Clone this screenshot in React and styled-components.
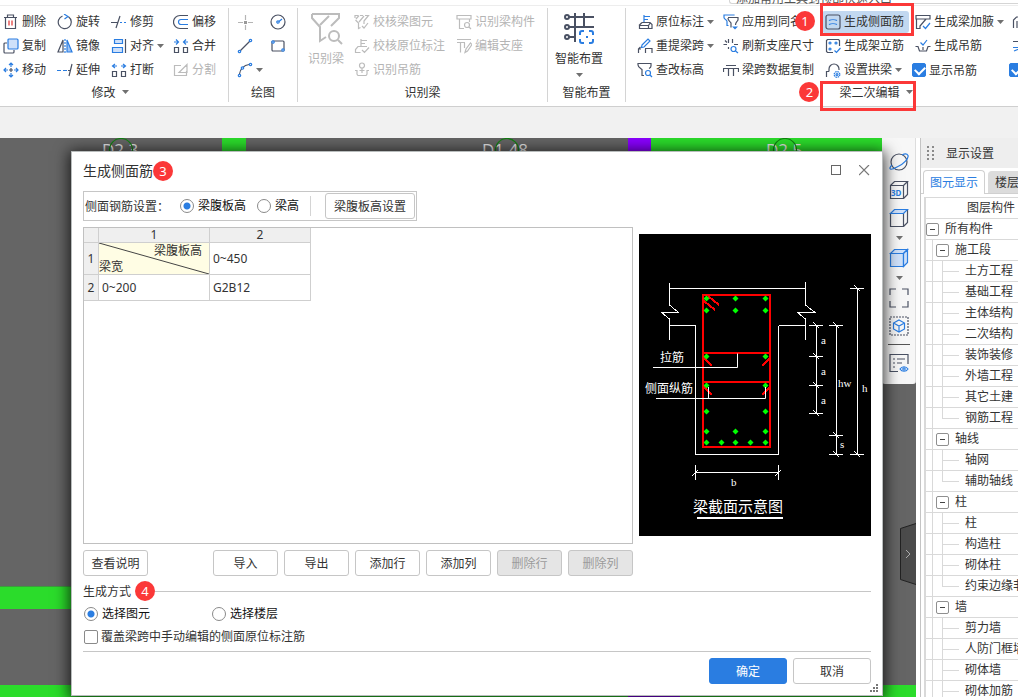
/* eslint-disable react/prop-types */

import { useState } from "react";
import styled, { createGlobalStyle, css } from "styled-components";

const GlobalStyle = createGlobalStyle`
  * {
    box-sizing: border-box;
  }
  body {
    margin: 0;
    overflow: hidden;
    font-family: "Noto Sans", "Noto Sans CJK SC", sans-serif;
    font-size: 12px;
    color: #333;
  }
  button, input {
    margin: 0;
    font-family: inherit;
    font-size: inherit;
    color: inherit;
  }
`;

const DARK = "#4a5163";
const BLUE = "#2a7de1";
const MUTED = "#bcbcbc";

const Page = styled.div`
  display: flex;
  flex-direction: column;
  height: 100vh;
  overflow: hidden;
  background-color: #f1f1f1;
`;

/* ---------- ribbon ---------- */

const TopStrip = styled.div`
  display: flex;
  flex: none;
  justify-content: flex-end;
  height: 6px;
  overflow: hidden;
  background-color: #fff;
  border-bottom: 1px solid #ededed;
`;
const HintBox = styled.div`
  display: flex;
  align-items: flex-end;
  width: 289px;
  height: 4px;
  padding-left: 6px;
  line-height: 8px;
  color: #555;
  border: 1px solid #d5d5d5;
  border-top: none;
  border-right: none;
  border-radius: 0 0 0 3px;
`;
const RibbonBar = styled.header`
  position: relative;
  z-index: 2;
  display: flex;
  flex: none;
  height: 101px;
  background-color: #fff;
  border-bottom: 1px solid #cfcfcf;
`;
const Group = styled.section`
  display: flex;
  flex: none;
  flex-direction: column;
  width: ${(p) => p.$width}px;
  margin: 2px 0 4px;
  padding-top: 2px;
  border-right: 1px solid #d4d4d4;
`;
const GroupBody = styled.div`
  display: flex;
  height: 72px;
  padding-left: ${(p) => p.$indent || 0}px;
`;
const GroupLabel = styled.div`
  display: flex;
  align-items: center;
  justify-content: center;
  height: 24px;
  padding-right: ${(p) => p.$end || 0}px;
`;
const LabelButton = styled.button`
  position: relative;
  display: flex;
  align-items: center;
  gap: 6px;
  height: 20px;
  padding: 0;
  background: none;
  border: none;
`;
const ToolGrid = styled.div`
  display: grid;
  grid-template-columns: ${(p) => p.$columns};
  grid-template-rows: repeat(3, 24px);
  grid-auto-flow: column;
  align-items: center;
  justify-items: start;
`;
const ToolButton = styled.button`
  position: relative;
  display: flex;
  align-items: center;
  gap: 3px;
  height: 22px;
  padding: 0 3px;
  line-height: 20px;
  white-space: nowrap;
  background-color: ${(p) => (p.$active ? "#c2d8f0" : "transparent")};
  border: none;
  border-radius: 3px;
  &:disabled {
    color: #b4b4b4;
  }
  &:hover:enabled {
    background-color: #d6e5f6;
  }
  ${(p) =>
    p.$active &&
    css`
      padding: 0 5px 0 3px;
    `}
`;
const BigButton = styled.button`
  display: flex;
  flex-direction: column;
  align-items: center;
  width: 52px;
  height: 72px;
  padding: 1px 0 0;
  line-height: 16px;
  white-space: nowrap;
  background: none;
  border: none;
  gap: 6px;
  &:disabled {
    width: 42px;
    margin-right: 4px;
    color: #b4b4b4;
  }
`;
const ToolCheck = styled.label`
  display: flex;
  align-items: center;
  gap: 3px;
  white-space: nowrap;
`;
const Frame = styled.span`
  position: absolute;
  inset: ${(p) => p.$inset};
  border: 3px solid #fb3838;
  pointer-events: none;
`;
const Badge = styled.span`
  display: flex;
  flex: none;
  align-items: center;
  justify-content: center;
  width: 20px;
  height: 20px;
  font-size: 13px;
  line-height: 20px;
  color: #fff;
  background-color: #fb3838;
  border-radius: 50%;
`;
const FloatingBadge = styled(Badge)`
  position: absolute;
  top: 0;
  left: ${(p) => p.$left}px;
`;

/* ---------- form controls ---------- */

const Radio = styled.input.attrs({ type: "radio" })`
  flex: none;
  width: 14px;
  height: 14px;
  appearance: none;
  background-color: #fff;
  border: 1px solid #8a8a8a;
  border-radius: 50%;
  &:checked {
    background-image: radial-gradient(circle, ${BLUE} 3px, transparent 4px);
  }
`;
const Checkbox = styled.input.attrs({ type: "checkbox" })`
  position: relative;
  flex: none;
  width: 14px;
  height: 14px;
  appearance: none;
  background-color: #fff;
  border: 1px solid #8a8a8a;
  border-radius: 2px;
  &:checked {
    background-color: ${BLUE};
    border-color: ${BLUE};
  }
  &:checked::after {
    content: "";
    position: absolute;
    top: 2px;
    left: 2px;
    width: 8px;
    height: 5px;
    border: solid #fff;
    border-width: 0 0 2px 2px;
    transform: rotate(-45deg);
  }
`;
const Choice = styled.label`
  display: flex;
  align-items: center;
  gap: 4px;
  min-width: ${(p) => p.$width || 0}px;
  line-height: 18px;
  color: #111;
`;
const Button = styled.button`
  width: ${(p) => p.$width || 65}px;
  height: 26px;
  padding: 2px 0 0;
  line-height: 20px;
  white-space: nowrap;
  color: ${(p) => (p.$primary ? "#fff" : "#333")};
  background-color: ${(p) => (p.$primary ? BLUE : "#fff")};
  border: 1px solid ${(p) => (p.$primary ? BLUE : "#c6c6c6")};
  border-radius: 3px;
  &:disabled {
    color: #9b9b9b;
    background-color: #e5e5e5;
  }
`;

/* ---------- workspace ---------- */

const Workspace = styled.main`
  display: flex;
  flex: 1;
  min-height: 0;
  margin-top: 31px;
  background-color: #fff;
`;
const Canvas = styled.div`
  position: relative;
  flex: 1;
  min-width: 0;
  overflow: hidden;
  background-color: #656565;
`;
const Drawing = styled.svg`
  display: block;
  width: 100%;
  height: 100%;
`;
const ViewBar = styled.nav`
  position: absolute;
  top: 0;
  right: 0;
  display: flex;
  flex-direction: column;
  align-items: center;
  gap: 8px;
  width: 34px;
  padding: 14px 0 11px 1px;
  background-color: #f7f7f7;
  border: solid #ddd;
  border-width: 0 1px 0 0;
  border-radius: 0 0 3px 3px;
`;
const ViewButton = styled.button`
  display: flex;
  padding: 0;
  background: none;
  border: none;
`;
const ViewRule = styled.span`
  width: 22px;
  height: 1px;
  background-color: #555;
`;
const CollapseTab = styled.button`
  position: absolute;
  top: 385px;
  right: 0;
  display: flex;
  padding: 0;
  background: none;
  border: none;
`;

/* ---------- dialog ---------- */

const Dialog = styled.section`
  position: absolute;
  top: 13px;
  right: 33px;
  left: 71px;
  display: flex;
  flex-direction: column;
  padding: 0 11px 11px;
  background-color: #fff;
  border: 1px solid #b9bdbd;
  box-shadow: 0 2px 14px 2px rgba(0, 0, 0, 0.75);
`;
const TitleBar = styled.div`
  display: flex;
  align-items: center;
  height: 38px;
`;
const Title = styled.h1`
  margin: 0;
  font-size: 14px;
  font-weight: 400;
  line-height: 20px;
`;
const WindowButtons = styled.div`
  display: flex;
  gap: 16px;
  margin-left: auto;
`;
const IconButton = styled.button`
  display: flex;
  padding: 0;
  background: none;
  border: none;
`;
const Settings = styled.div`
  display: flex;
  align-items: center;
  align-self: flex-start;
  height: 30px;
  margin-top: 1px;
  padding: 0 1px;
  border: 1px solid #c6c6c6;
`;
const SettingsLabel = styled.span`
  width: 95px;
`;
const SettingsChoice = styled(Choice)`
  margin-right: 11px;
`;
const Divider = styled.span`
  width: 1px;
  height: 20px;
  margin-right: 14px;
  background-color: #d4d4d4;
`;
const Content = styled.div`
  display: flex;
  align-items: center;
  gap: 6px;
  margin-top: 6px;
`;
const TableArea = styled.div`
  flex: 1;
  align-self: stretch;
  min-height: 317px;
  border: 1px solid #c0c0c0;
`;
const Table = styled.table`
  width: 227px;
  table-layout: fixed;
  border-spacing: 0;
  td,
  th {
    padding: 0;
    font-weight: 400;
    line-height: 14px;
    border: solid #cfcfcf;
    border-width: 0 1px 1px 0;
  }
`;
const HeadCell = styled.th`
  color: #333;
  background-color: #efefef;
`;
const Col = styled.col`
  width: ${(p) => p.$width}px;
`;
const Row = styled.tr`
  height: ${(p) => p.$height}px;
`;
const Value = styled.span`
  padding-left: 3px;
`;
const SplitCell = styled.div`
  position: relative;
  display: flex;
  flex-direction: column;
  justify-content: space-between;
  height: 31px;
  line-height: 16px;
  background-color: #fffde4;
`;
const SplitTop = styled.span`
  padding-right: 7px;
  text-align: right;
`;
const SplitLine = styled.svg`
  position: absolute;
  inset: 0;
  width: 100%;
  height: 100%;
`;
const Diagram = styled.svg`
  flex: none;
  width: 232px;
  height: 302px;
  margin-bottom: 1px;
  background-color: #000;
`;
const Actions = styled.div`
  display: flex;
  gap: 6px;
  margin-top: 6px;
`;
const ActionsGap = styled.span`
  width: 53px;
`;
const Fieldset = styled.fieldset`
  min-width: 0;
  margin: 6px 0 0;
  padding: 0 0 5px;
  border: none;
  border-bottom: 1px solid #c6c6c6;
`;
const SectionHead = styled.div`
  display: flex;
  align-items: center;
  gap: 4px;
  height: 18px;
`;
const SectionLine = styled.span`
  flex: 1;
  height: 1px;
  margin-left: -4px;
  background-color: #c6c6c6;
`;
const Choices = styled.div`
  display: flex;
  margin: 5px 0;
  padding-left: 1px;
`;
const WideChoice = styled(Choice)`
  gap: 3px;
  padding-left: 1px;
  color: #333;
`;
const Footer = styled.div`
  display: flex;
  justify-content: flex-end;
  gap: 6px;
  padding-top: 6px;
`;
const ResizeGrip = styled.svg`
  position: absolute;
  right: 3px;
  bottom: 2px;
`;

/* ---------- side panel ---------- */

const Panel = styled.aside`
  display: flex;
  flex: none;
  flex-direction: column;
  width: 98px;
  margin-left: 4px;
  overflow: hidden;
  white-space: nowrap;
  background-color: #fff;
  border-left: 1px solid #c4c4c4;
`;
const PanelHead = styled.div`
  display: flex;
  flex: none;
  align-items: center;
  gap: 12px;
  height: 30px;
  padding-left: 6px;
  background-color: #eee;
`;
const PanelTitle = styled.h2`
  margin: 0;
  font-size: 12px;
  font-weight: 400;
`;
const Tabs = styled.div`
  display: flex;
  flex: none;
  align-items: flex-end;
  gap: 3px;
  height: 26px;
  padding-left: 2px;
  border-bottom: 1px solid #d0d0d0;
`;
const Tab = styled.button`
  flex: none;
  height: ${(p) => (p.$active ? 24 : 22)}px;
  margin-bottom: ${(p) => (p.$active ? -1 : 0)}px;
  padding: 0 6px;
  line-height: 20px;
  color: ${(p) => (p.$active ? BLUE : "#333")};
  background-color: ${(p) => (p.$active ? "#fff" : "#dcdcdc")};
  border: 1px solid ${(p) => (p.$active ? "#d0d0d0" : "#dcdcdc")};
  border-bottom: none;
  border-radius: 4px 4px 0 0;
`;
const Tree = styled.ul`
  margin: 3px 0 0 3px;
  padding: 0;
  list-style: none;
  border-top: 1px solid #d9d9d9;
  border-left: 2px solid #d9d9d9;
`;
const TreeRow = styled.li`
  display: flex;
  align-items: center;
  height: 21px;
  line-height: 20px;
  border-bottom: 1px solid #d9d9d9;
`;
const TreeHead = styled(TreeRow)`
  padding-left: 41px;
`;
const Guide = styled.span`
  flex: none;
  align-self: stretch;
  width: 4px;
  margin-left: 6px;
  border-left: 1px solid #d9d9d9;
`;
const Elbow = styled.span`
  flex: none;
  align-self: stretch;
  width: 17px;
  margin: 0 6px;
  background:
    linear-gradient(#d9d9d9, #d9d9d9) 0 50% / 100% 1px no-repeat,
    linear-gradient(#d9d9d9, #d9d9d9) 0 0 / 1px ${(p) => (p.$last ? "50%" : "100%")} no-repeat;
`;
const Toggle = styled.button`
  display: flex;
  flex: none;
  align-items: center;
  justify-content: center;
  width: 13px;
  height: 13px;
  margin-right: 6px;
  padding: 0;
  background-color: #fff;
  border: 1px solid #8f8f8f;
  border-radius: 2px;
  &::after {
    content: "";
    width: 5px;
    height: 1px;
    background-color: #444;
  }
`;

/* ---------- icons ---------- */

const shapes = {
  trash: (
    <>
      <path d="M1 3.500h13M4.500 3V1h6v2M2.500 4v10.500h10V4" stroke={DARK} />
      <path d="M6 6.500v5M9 6.500v5" stroke="#e03030" />
    </>
  ),
  copy: (
    <>
      <path d="M4 5H2a1 1 0 0 0-1 1v8a1 1 0 0 0 1 1h8a1 1 0 0 0 1-1v-2" stroke={DARK} />
      <rect x="5" y="1" width="10" height="10" rx="1" stroke={BLUE} fill="#cfe1fa" />
    </>
  ),
  move: (
    <>
      <path d="M8 6v4M6 8h4" stroke={DARK} />
      <path
        d="M8 5V1M6 3l2-2 2 2M8 11v4M6 13l2 2 2-2M5 8H1M3 6L1 8l2 2M11 8h4M13 6l2 2-2 2"
        stroke={BLUE}
      />
    </>
  ),
  rotate: (
    <>
      <path d="M5.500 2A6.500 6.500 0 1 0 11.500 2.800" stroke={DARK} />
      <path d="M7 0l4 2.500L7.500 5" stroke={BLUE} />
    </>
  ),
  mirror: (
    <>
      <path d="M6 2v12H1z" stroke={DARK} />
      <path d="M10 2v12h5z" stroke={BLUE} fill="#9cc2f4" />
      <path d="M8 1v14" stroke={BLUE} strokeDasharray="2 1" />
    </>
  ),
  extend: (
    <>
      <path d="M0 8.500h4M6 8.500h4" stroke={BLUE} />
      <path d="M11 8.500h2M15 2l-3 12" stroke={DARK} />
    </>
  ),
  trim: (
    <>
      <path d="M0 8.500h7M9 2L5 14" stroke={DARK} />
      <path d="M9 8.500h2M13 8.500h2" stroke={BLUE} />
    </>
  ),
  align: (
    <>
      <path d="M14.500 1v14" stroke={DARK} />
      <path d="M3.500 1.500h8v4h-8zM1.500 9.500h10v5h-10z" stroke={BLUE} fill="#cfe1fa" />
    </>
  ),
  split: (
    <>
      <path d="M1.500 9.500h4v5h-4zM10.500 9.500h4v5h-4z" stroke={DARK} />
      <path d="M6 4H2M4 2L1.500 4 4 6M10 4h4M12 2l2.500 2L12 6" stroke={BLUE} />
    </>
  ),
  offset: (
    <>
      <path d="M15 1.500H7a6.500 6.500 0 0 0 0 13h8" stroke={DARK} />
      <path d="M15 5.500H8a2.500 2.500 0 0 0 0 5h7" stroke={BLUE} />
    </>
  ),
  merge: (
    <>
      <path d="M1.500 9.500h4v5h-4zM10.500 9.500h4v5h-4z" stroke={DARK} />
      <path d="M1 4h4M3 1.500L5.500 4 3 6.500M15 4h-4M13 1.500L10.500 4 13 6.500" stroke={BLUE} />
    </>
  ),
  divide: <path d="M8 3.500H1.500v10h12V9M6 10.500l8-8v8z" stroke={MUTED} />,
  point: (
    <>
      <path d="M8.500 1v5M8.500 11v5M1 8.500h5M11 8.500h5" stroke="#b5b5b5" />
      <rect x="7" y="7" width="3" height="3" fill="#999" />
    </>
  ),
  line: (
    <>
      <path d="M3 13L13 3" stroke={DARK} />
      <circle cx="2.500" cy="13.500" r="1.200" stroke={BLUE} />
      <circle cx="13.500" cy="2.500" r="1.200" stroke={BLUE} />
    </>
  ),
  arc: (
    <>
      <path d="M2.500 12C3 7 7 3 12 2.500" stroke={DARK} />
      <circle cx="2.500" cy="13.500" r="1.200" stroke={BLUE} />
      <circle cx="13.500" cy="2.500" r="1.200" stroke={BLUE} />
      <circle cx="5.500" cy="6" r="1.200" stroke={BLUE} fill="#fff" />
    </>
  ),
  circle: (
    <>
      <circle cx="8" cy="8" r="7" stroke={DARK} />
      <path d="M9 7.500l3-2.500" stroke={BLUE} />
      <circle cx="8" cy="8" r="1.200" stroke={BLUE} />
    </>
  ),
  rect: (
    <>
      <rect x="2" y="3" width="12" height="10" rx="1" stroke={DARK} />
      <circle cx="3" cy="4" r="1.200" stroke={BLUE} fill="#fff" />
      <circle cx="13" cy="12" r="1.200" stroke={BLUE} fill="#fff" />
    </>
  ),
  checkBeam: (
    <path
      d="M1 4V1.500h3M6 1.500h3M11 1.500h3.500L10 7v3M1.500 6l3 3v5.500l2-1M5 8l5-6M2 5l3-3.500M8 12l2 2 4-5"
      stroke={MUTED}
    />
  ),
  checkMark: <path d="M7 1v7M7 2.500h6M7 5.500h4M5 8.500H4l-2.500 3v3h5M5 8.500h8M8 12l2.500 2.500L15 9.500" stroke={MUTED} />,
  hook: (
    <path
      d="M5.500 3.500a2.500 2.500 0 1 1 5 0 2.500 2.500 0 0 1-5 0M8 6v5M5.500 8.500h5M1 8.500h2V11a2 2 0 0 0 2 2.500h6a2 2 0 0 0 2-2.500V8.500h2"
      stroke={MUTED}
    />
  ),
  beamPart: (
    <path
      d="M1 1.500h14v3.500H1zM3.500 5v9.500H8M13.500 5v3M8.500 11a2.500 2.500 0 1 1 5 0 2.500 2.500 0 0 1-5 0M13 13l2 2"
      stroke={MUTED}
    />
  ),
  editSeat: <path d="M1 1.500h14M1 4.500h8M4.500 5v9.500M8.500 5v5M9 14.500l1-3.500 4.500-6 1.500 1.500L11.500 13z" stroke={MUTED} />,
  mark: (
    <>
      <path d="M7 8V1M7 2.500h6M7 5.500h4" stroke={BLUE} />
      <path d="M5 8.500h8l2 2v4h-3M5 8.500l-3 3M2.500 11.500h9v3h-9zM11.500 11.500l2-3" stroke={DARK} />
    </>
  ),
  respan: (
    <>
      <path d="M5 7l6-6 2 2-6 6-2.500.500z" stroke={BLUE} />
      <path d="M1.500 15v-4H4M8 10.500h7V15M8.500 11v4M1.500 11l2-2" stroke={DARK} />
    </>
  ),
  elevation: (
    <>
      <path d="M7 13.500H5v-6C3 6 1 5 1 3V1.500h13V4c0 1-1 2-2 2.500" stroke={DARK} />
      <circle cx="11" cy="11" r="2.500" stroke={BLUE} />
      <path d="M13 13l2 2" stroke={BLUE} />
    </>
  ),
  apply: (
    <>
      <path d="M11 1.500V1H1v2.500c0 2 3 2 3 4v4h1.500" stroke={BLUE} />
      <path d="M5 3.500h10V6c-1 2-2.500 2-2.500 5M8 13.500V9C7 7 5 7 5 4" stroke={DARK} />
      <path d="M9 12.500h6l-3 3z" fill={BLUE} />
    </>
  ),
  refresh: (
    <>
      <path d="M0.500 6.500H4M5.500 1v4M2 2.500l2 2M9.500 1v4M11 6.500h4M5.500 9v2" stroke={DARK} />
      <circle cx="10.500" cy="11" r="2.500" stroke={BLUE} />
      <path d="M12.500 13l2.500 2" stroke={BLUE} />
    </>
  ),
  copySpan: <path d="M3 3.500h10M0.500 10V6.500h15V10M5.500 7v7M10.500 7v7" stroke={DARK} />,
  sideBar: (
    <>
      <rect x="1" y="1" width="14" height="14" rx="2" stroke={DARK} />
      <path d="M4 6.500c2-1 6-1 8 0M4 10.500c2-1 6-1 8 0" stroke={BLUE} />
    </>
  ),
  topBar: (
    <>
      <path d="M8 14.500H2.500l-1-1v-11l1-1h11l1 1V8" stroke={DARK} />
      <circle cx="5" cy="5" r="1" stroke={BLUE} />
      <circle cx="11" cy="5" r="1" stroke={BLUE} />
      <circle cx="5" cy="11" r="1" stroke={BLUE} />
      <path d="M9.500 12.500l2 2 4-4.500" stroke={BLUE} />
    </>
  ),
  arch: (
    <>
      <path d="M4 9.500H1.500V15M4 9.500V7a5 5 0 0 1 10 0v1" stroke={DARK} />
      <circle cx="12" cy="12.500" r="2.800" stroke={BLUE} strokeDasharray="1.500 .7" />
      <circle cx="12" cy="12.500" r="1" stroke={BLUE} />
    </>
  ),
  haunch: (
    <>
      <path d="M1 1.500h14v3.500H1zM1.500 5v9.500H5V12l6-7" stroke={DARK} />
      <path d="M8 12l2.500 2.500L15 9" stroke={BLUE} />
    </>
  ),
  hanger: (
    <>
      <path d="M0.500 8.500H3l1.500 4.500h7L13 8.500h2.500M8 9v3" stroke={DARK} />
      <path d="M5.500 4.500l2.500 2.500 4-5" stroke={BLUE} />
    </>
  ),
  more: <path d="M1.500 14V6l3-3h10M5 14V7" stroke={DARK} />,
  sort: (
    <>
      <path d="M1 3.500h10M9 1l2.500 2.500" stroke={DARK} />
      <path d="M1 9.500h10L2 13" stroke={BLUE} />
    </>
  ),
};

function Icon({ name }) {
  return (
    <svg width="16" height="16" viewBox="0 0 16 16" fill="none" strokeWidth="1.2" aria-hidden="true">
      {shapes[name]}
    </svg>
  );
}

function Caret() {
  return (
    <svg width="7" height="4" viewBox="0 0 7 4" aria-hidden="true">
      <path d="M0 0h7L3.500 4z" fill="#707070" />
    </svg>
  );
}

/* ---------- ribbon content ---------- */

const modifyTools = [
  { icon: "trash", text: "删除" },
  { icon: "copy", text: "复制" },
  { icon: "move", text: "移动" },
  { icon: "rotate", text: "旋转" },
  { icon: "mirror", text: "镜像" },
  { icon: "extend", text: "延伸" },
  { icon: "trim", text: "修剪" },
  { icon: "align", text: "对齐", menu: true },
  { icon: "split", text: "打断" },
  { icon: "offset", text: "偏移" },
  { icon: "merge", text: "合并" },
  { icon: "divide", text: "分割", disabled: true },
];

const drawTools = [
  { icon: "point", label: "点" },
  { icon: "line", label: "直线" },
  { icon: "arc", label: "弧", menu: true },
  { icon: "circle", label: "圆" },
  { icon: "rect", label: "矩形" },
];

const identifyTools = [
  { icon: "checkBeam", text: "校核梁图元", disabled: true },
  { icon: "checkMark", text: "校核原位标注", disabled: true },
  { icon: "hook", text: "识别吊筋", disabled: true },
  { icon: "beamPart", text: "识别梁构件", disabled: true },
  { icon: "editSeat", text: "编辑支座", disabled: true },
];

const beamTools = [
  { icon: "mark", text: "原位标注", menu: true },
  { icon: "respan", text: "重提梁跨", menu: true },
  { icon: "elevation", text: "查改标高" },
  { icon: "apply", text: "应用到同名梁" },
  { icon: "refresh", text: "刷新支座尺寸" },
  { icon: "copySpan", text: "梁跨数据复制" },
  { icon: "sideBar", text: "生成侧面筋", active: true, badge: 1 },
  { icon: "topBar", text: "生成架立筋" },
  { icon: "arch", text: "设置拱梁", menu: true },
  { icon: "haunch", text: "生成梁加腋", menu: true },
  { icon: "hanger", text: "生成吊筋" },
  { check: true, text: "显示吊筋" },
  { icon: "more", label: "更多" },
  { icon: "sort", label: "排序" },
  { check: true, label: "显示" },
];

function Tool({ tool }) {
  if (tool.check) {
    return (
      <ToolCheck>
        <Checkbox defaultChecked aria-label={tool.label} />
        {tool.text}
      </ToolCheck>
    );
  }
  return (
    <ToolButton type="button" disabled={tool.disabled} $active={tool.active} aria-label={tool.label}>
      <Icon name={tool.icon} />
      {tool.text}
      {tool.menu && <Caret />}
      {tool.badge && (
        <>
          <Frame $inset="-8px -5px -3px -2px" />
          <FloatingBadge $left={-27}>{tool.badge}</FloatingBadge>
        </>
      )}
    </ToolButton>
  );
}

function Tools({ tools, columns }) {
  return (
    <ToolGrid $columns={columns}>
      {tools.map((tool) => (
        <Tool key={tool.icon || tool.text || tool.label} tool={tool} />
      ))}
    </ToolGrid>
  );
}

function Ribbon() {
  return (
    <RibbonBar>
      <Group $width={229}>
        <GroupBody>
          <Tools tools={modifyTools} columns="54px 54px 62px 56px" />
        </GroupBody>
        <GroupLabel $end={8}>
          <LabelButton type="button">
            修改
            <Caret />
          </LabelButton>
        </GroupLabel>
      </Group>

      <Group $width={69}>
        <GroupBody $indent={5}>
          <Tools tools={drawTools} columns="33px 30px" />
        </GroupBody>
        <GroupLabel>绘图</GroupLabel>
      </Group>

      <Group $width={250}>
        <GroupBody $indent={7}>
          <BigButton type="button" disabled>
            <svg width="34" height="34" viewBox="0 0 34 34" fill="none" stroke={MUTED} strokeWidth="2">
              <path d="M3 3h27v4l-8 8M3 3v4l8 9v14l6-4M11 14L20 5" />
              <circle cx="25" cy="25" r="5" />
              <path d="M29 29l4 4" />
            </svg>
            识别梁
          </BigButton>
          <Tools tools={identifyTools} columns="102px 90px" />
        </GroupBody>
        <GroupLabel>识别梁</GroupLabel>
      </Group>

      <Group $width={78}>
        <GroupBody $indent={5}>
          <BigButton type="button">
            <svg width="34" height="34" viewBox="0 0 34 34" fill="none" stroke={DARK} strokeWidth="2">
              <path d="M7 6h25M7 16h25M7 26h6M13 2v29M22 2v15" />
              <circle cx="5" cy="6" r="2" />
              <circle cx="5" cy="16" r="2" />
              <circle cx="5" cy="26" r="2" />
              <path
                d="M18 24v-2a2 2 0 0 1 2-2h2M27 20h2a2 2 0 0 1 2 2v2M31 28v2a2 2 0 0 1-2 2h-2M22 32h-2a2 2 0 0 1-2-2v-2"
                stroke={BLUE}
              />
              <path d="M24 26h2" stroke={BLUE} />
            </svg>
            智能布置
            <Caret />
          </BigButton>
        </GroupBody>
        <GroupLabel>智能布置</GroupLabel>
      </Group>

      <Group $width={501}>
        <GroupBody $indent={8}>
          <Tools tools={beamTools} columns="86px 102px 90px 97px 113px" />
        </GroupBody>
        <GroupLabel>
          <LabelButton type="button">
            梁二次编辑
            <Caret />
            <Frame $inset="-1px -3px -9px -19px" />
            <FloatingBadge $left={-40}>2</FloatingBadge>
          </LabelButton>
        </GroupLabel>
      </Group>
    </RibbonBar>
  );
}

/* ---------- drawing behind the dialog ---------- */

function BeamPlan() {
  return (
    <Drawing>
      <rect x="222" y="0" width="24" height="30" fill="#2bdc2b" />
      <rect x="628" y="0" width="24" height="30" fill="#8a00ff" />
      <rect x="651" y="0" width="232" height="30" fill="#2bdc2b" />
      <rect x="0" y="448" width="120" height="23" fill="#2bdc2b" />
      <path d="M0 448.500h120" stroke="#3d9a3d" />
      <rect x="0" y="547" width="100%" height="20" fill="#2bdc2b" />
      <rect x="628" y="547" width="52" height="20" fill="#8a00ff" />
      <g fill="#e6e6e6" fontSize="17" fontFamily="Open Sans">
        <text x="102" y="18">D2.3</text>
        <text x="482" y="18">D1.48</text>
        <text x="766" y="18">D2.5</text>
      </g>
      <g fill="none" stroke="#138013" strokeWidth="1.2">
        <circle cx="121" cy="12" r="11.500" />
        <circle cx="507" cy="12" r="11.500" />
        <circle cx="785" cy="12" r="11.500" />
      </g>
    </Drawing>
  );
}

const viewShapes = {
  orbit: (
    <>
      <circle cx="10" cy="10" r="8" stroke={DARK} />
      <path d="M3 13C-1 17 1 19 8 15C15 12 20 6 19 3.500C18 1.500 15 2 13 3" stroke={BLUE} />
    </>
  ),
  cube3d: (
    <>
      <path d="M1.500 5.500h13v13h-13zM1.500 5.500l4-4h13l-4 4M18.500 1.500v13l-4 4" stroke={DARK} />
      <text x="2" y="16" fontSize="8" fontWeight="700" fill={BLUE}>
        3D
      </text>
    </>
  ),
  cubeTop: (
    <>
      <path d="M1.500 5.500h13v13h-13zM18.500 1.500v13l-4 4" stroke={DARK} />
      <path d="M1.500 5.500l4-4h13l-4 4z" stroke={BLUE} fill="#cfe1fa" />
    </>
  ),
  cubeSolid: (
    <g stroke={BLUE} fill="#cfe1fa">
      <path d="M1.500 5.500h13v13h-13z" />
      <path d="M1.500 5.500l4-4h13l-4 4z" />
      <path d="M14.500 5.500l4-4v13l-4 4z" />
    </g>
  ),
  corners: <path d="M1 7V1h6M13 1h6v6M19 13v6h-6M7 19H1v-6" stroke={DARK} />,
  selectCube: (
    <>
      <rect x="1" y="1" width="18" height="18" stroke={DARK} strokeDasharray="2 1" />
      <path d="M10 4l5.500 3v6L10 16l-5.500-3V7zM4.500 7l5.500 3 5.500-3M10 10v6" stroke={BLUE} />
    </>
  ),
  listEye: (
    <>
      <path d="M9 18.500H1v-17h18V11M4 6h2M8 6h8M4 10h2M8 10h5M4 14h2" stroke={DARK} />
      <path d="M11 16c2-3 6-3 8 0c-2 3-6 3-8 0z" stroke={BLUE} fill="#fff" />
      <circle cx="15" cy="16" r="1.200" stroke={BLUE} />
    </>
  ),
};

function ViewTool({ name, label }) {
  return (
    <ViewButton type="button" aria-label={label}>
      <svg width="20" height="20" viewBox="0 0 20 20" fill="none" strokeWidth="1.2">
        {viewShapes[name]}
      </svg>
    </ViewButton>
  );
}

function ViewTools() {
  return (
    <ViewBar>
      <ViewTool name="orbit" label="动态观察" />
      <ViewTool name="cube3d" label="三维" />
      <ViewTool name="cubeTop" label="俯视" />
      <Caret />
      <ViewTool name="cubeSolid" label="实体" />
      <Caret />
      <ViewTool name="corners" label="全屏" />
      <ViewTool name="selectCube" label="局部三维" />
      <ViewRule />
      <ViewTool name="listEye" label="显示设置" />
    </ViewBar>
  );
}

/* ---------- beam section diagram ---------- */

const rebars = [
  [67, 64], [96, 64], [126, 64],
  [67, 76], [96, 76], [126, 76],
  [67, 122], [126, 122],
  [67, 151], [126, 151],
  [67, 177], [126, 177],
  [67, 197], [96, 197], [126, 197],
  [67, 208], [82, 208], [96, 208], [111, 208], [126, 208],
];

const ticks = [
  [177, 91], [177, 122], [177, 151], [177, 179],
  [197, 91], [197, 201], [197, 220],
  [218, 54], [218, 220],
];

function SectionDiagram() {
  return (
    <Diagram viewBox="0 0 232 302" fill="none" role="img" aria-label="梁截面示意图">
      <g stroke="#fff" shapeRendering="crispEdges">
        <path d="M30.500 54.500h136M56.500 91.500v129h83v-129M30.500 91.500h26M139.500 91.500h27" />
        <path d="M30.500 49v22l9 7.500h-17l8 6.500v21M166.500 48v23l9.500 7.500h-17.500l8 6.500v21" />
        <path d="M177.500 91v89M197.500 91v130M218.500 54v167M56.500 238.500h83M56.500 231v15M139.500 231v15" />
        <path d="M53 242l6-6M136 242l6-6" />
        {ticks.map(([x, y]) => (
          <path key={`${x}-${y}`} d={`M${x - 7} ${y + 0.5}h14M${x - 3} ${y - 3}l6 6`} />
        ))}
      </g>
      <g stroke="#f00" strokeWidth="2" shapeRendering="crispEdges">
        <path d="M64 61h67v152H64zM64 119h67M64 148h67" />
        <path d="M69 62l11 9M65 67l11 9M65 124l8 8M131 124l-8 8M65 153l8 8M131 153l-8 8" />
      </g>
      {rebars.map(([x, y]) => (
        <path key={`${x}-${y}`} d={`M${x + 0.5} ${y - 2.5}l3 3-3 3-3-3z`} fill="#0f0" />
      ))}
      <path d="M14 133.500h84.500v-14M17 164.500h109.500V153M69.500 164.500V153" stroke="#fff" />
      <path d="M58 284h86" stroke="#fff" strokeWidth="2" />
      <g fill="#fff" fontSize="12">
        <text x="21" y="128">拉筋</text>
        <text x="6" y="159">侧面纵筋</text>
        <text x="54" y="278" fontSize="15">梁截面示意图</text>
      </g>
      <g fill="#fff" fontSize="11" fontFamily="Liberation Serif">
        <text x="182" y="110">a</text>
        <text x="182" y="141">a</text>
        <text x="182" y="170">a</text>
        <text x="199" y="153">hw</text>
        <text x="223" y="158">h</text>
        <text x="201" y="214">s</text>
        <text x="92" y="252">b</text>
      </g>
    </Diagram>
  );
}

/* ---------- dialog ---------- */

function SideBarDialog() {
  const [basis, setBasis] = useState("web");
  const [mode, setMode] = useState("element");

  return (
    <Dialog role="dialog" aria-labelledby="dialog-title">
      <TitleBar>
        <Title id="dialog-title">生成侧面筋</Title>
        <Badge>3</Badge>
        <WindowButtons>
          <IconButton type="button" aria-label="最大化">
            <svg width="12" height="12" fill="none" stroke="#666">
              <rect x="0.500" y="0.500" width="9" height="9" />
            </svg>
          </IconButton>
          <IconButton type="button" aria-label="关闭">
            <svg width="12" height="12" fill="none" stroke="#777" strokeWidth="1.2">
              <path d="M0 0l10 10M10 0L0 10" />
            </svg>
          </IconButton>
        </WindowButtons>
      </TitleBar>

      <Settings>
        <SettingsLabel>侧面钢筋设置：</SettingsLabel>
        <SettingsChoice>
          <Radio name="basis" checked={basis === "web"} onChange={() => setBasis("web")} />
          梁腹板高
        </SettingsChoice>
        <SettingsChoice>
          <Radio name="basis" checked={basis === "beam"} onChange={() => setBasis("beam")} />
          梁高
        </SettingsChoice>
        <Divider />
        <Button type="button" $width={90}>
          梁腹板高设置
        </Button>
      </Settings>

      <Content>
        <TableArea>
          <Table>
            <colgroup>
              <Col $width={15} />
              <Col $width={111} />
              <Col $width={101} />
            </colgroup>
            <thead>
              <Row $height={15}>
                <HeadCell aria-label="行号" />
                <HeadCell scope="col">1</HeadCell>
                <HeadCell scope="col">2</HeadCell>
              </Row>
            </thead>
            <tbody>
              <Row $height={32}>
                <HeadCell scope="row">1</HeadCell>
                <td>
                  <SplitCell>
                    <SplitLine viewBox="0 0 110 31" preserveAspectRatio="none">
                      <path d="M0 0l110 31" stroke="#444" />
                    </SplitLine>
                    <SplitTop>梁腹板高</SplitTop>
                    <span>梁宽</span>
                  </SplitCell>
                </td>
                <td>
                  <Value>0~450</Value>
                </td>
              </Row>
              <Row $height={26}>
                <HeadCell scope="row">2</HeadCell>
                <td>
                  <Value>0~200</Value>
                </td>
                <td>
                  <Value>G2B12</Value>
                </td>
              </Row>
            </tbody>
          </Table>
        </TableArea>
        <SectionDiagram />
      </Content>

      <Actions>
        <Button type="button">查看说明</Button>
        <ActionsGap />
        <Button type="button">导入</Button>
        <Button type="button">导出</Button>
        <Button type="button">添加行</Button>
        <Button type="button">添加列</Button>
        <Button type="button" disabled>
          删除行
        </Button>
        <Button type="button" disabled>
          删除列
        </Button>
      </Actions>

      <Fieldset aria-labelledby="mode-title">
        <SectionHead>
          <span id="mode-title">生成方式</span>
          <Badge>4</Badge>
          <SectionLine />
        </SectionHead>
        <Choices>
          <Choice $width={128}>
            <Radio name="mode" checked={mode === "element"} onChange={() => setMode("element")} />
            选择图元
          </Choice>
          <Choice>
            <Radio name="mode" checked={mode === "floor"} onChange={() => setMode("floor")} />
            选择楼层
          </Choice>
        </Choices>
        <WideChoice>
          <Checkbox />
          覆盖梁跨中手动编辑的侧面原位标注筋
        </WideChoice>
      </Fieldset>

      <Footer>
        <Button type="button" $width={78} $primary>
          确定
        </Button>
        <Button type="button" $width={78}>
          取消
        </Button>
      </Footer>
      <ResizeGrip width="9" height="9" fill="#777">
        <path d="M6 0h2v2h-2zM3 3h2v2h-2zM6 3h2v2h-2zM0 6h2v2h-2zM3 6h2v2h-2zM6 6h2v2h-2z" />
      </ResizeGrip>
    </Dialog>
  );
}

/* ---------- side panel ---------- */

const treeGroups = [
  {
    name: "施工段",
    items: ["土方工程", "基础工程", "主体结构", "二次结构", "装饰装修", "外墙工程", "其它土建", "钢筋工程"],
  },
  { name: "轴线", items: ["轴网", "辅助轴线"] },
  { name: "柱", items: ["柱", "构造柱", "砌体柱", "约束边缘非阴影区"] },
  { name: "墙", items: ["剪力墙", "人防门框墙", "砌体墙", "砌体加筋"] },
];

function LayerPanel() {
  return (
    <Panel>
      <PanelHead>
        <svg width="7" height="16" fill="#8a8a8a" aria-hidden="true">
          <path d="M0 1h2v2h-2zM5 1h2v2h-2zM0 5h2v2h-2zM5 5h2v2h-2zM0 9h2v2h-2zM5 9h2v2h-2zM0 13h2v2h-2zM5 13h2v2h-2z" />
        </svg>
        <PanelTitle>显示设置</PanelTitle>
      </PanelHead>
      <Tabs role="tablist">
        <Tab type="button" role="tab" aria-selected="true" $active>
          图元显示
        </Tab>
        <Tab type="button" role="tab" aria-selected="false">
          楼层显示
        </Tab>
      </Tabs>
      <Tree>
        <TreeHead>图层构件</TreeHead>
        <TreeRow>
          <Toggle type="button" aria-label="收起" />
          所有构件
        </TreeRow>
        {treeGroups.map((group) => [
          <TreeRow key={group.name}>
            <Guide />
            <Toggle type="button" aria-label="收起" />
            {group.name}
          </TreeRow>,
          ...group.items.map((item, i) => (
            <TreeRow key={`${group.name}-${item}`}>
              <Guide />
              <Elbow $last={i === group.items.length - 1 && group.name !== "墙"} />
              {item}
            </TreeRow>
          )),
        ])}
      </Tree>
    </Panel>
  );
}

function App() {
  return (
    <Page>
      <GlobalStyle />
      <TopStrip>
        <HintBox>添加常用工具到顶部快速入口</HintBox>
      </TopStrip>
      <Ribbon />
      <Workspace>
        <Canvas>
          <BeamPlan />
          <ViewTools />
          <CollapseTab type="button" aria-label="收起面板">
            <svg width="16" height="62" fill="none">
              <path d="M16 .5L.5 5.500v51L16 61.500" fill="#4b4b4b" stroke="#222" />
              <path d="M6 27l4 4-4 4" stroke="#aaa" />
            </svg>
          </CollapseTab>
          <SideBarDialog />
        </Canvas>
        <LayerPanel />
      </Workspace>
    </Page>
  );
}

export default App;
